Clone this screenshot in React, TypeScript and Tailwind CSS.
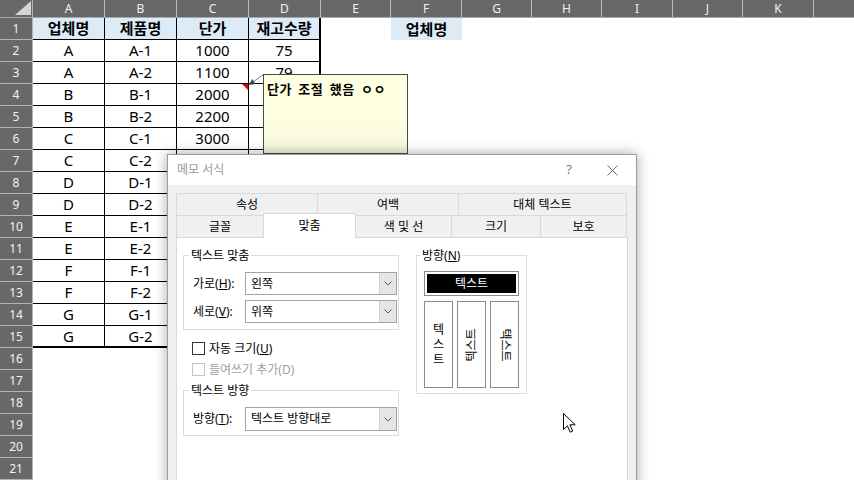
import clsx from "clsx";

const cols = [
  { l: "A", w: "w-[72px]" },
  { l: "B", w: "w-[72px]" },
  { l: "C", w: "w-[72px]" },
  { l: "D", w: "w-[72px]" },
  { l: "E", w: "w-[70px]" },
  { l: "F", w: "w-[71px]" },
  { l: "G", w: "w-[70px]" },
  { l: "H", w: "w-[70px]" },
  { l: "I", w: "w-[71px]" },
  { l: "J", w: "w-[70px]" },
  { l: "K", w: "w-[71px]" },
];

const tableRows = [
  ["업체명", "제품명", "단가", "재고수량"],
  ["A", "A-1", "1000", "75"],
  ["A", "A-2", "1100", "79"],
  ["B", "B-1", "2000", "60"],
  ["B", "B-2", "2200", "45"],
  ["C", "C-1", "3000", "30"],
  ["C", "C-2", "3100", "25"],
  ["D", "D-1", "4000", "50"],
  ["D", "D-2", "4200", "40"],
  ["E", "E-1", "5000", "20"],
  ["E", "E-2", "5100", "15"],
  ["F", "F-1", "6000", "35"],
  ["F", "F-2", "6300", "10"],
  ["G", "G-1", "7000", "55"],
  ["G", "G-2", "7500", "65"],
];

function ColumnHeader() {
  return (
    <div className="flex h-[18px] bg-[#686868] border-b border-[#a8a8a8]">
      <div className="w-[33px] shrink-0 border-r border-[#b4b4b4] flex items-end justify-end">
        <svg width="16" height="14" viewBox="0 0 16 14" className="mb-[2px] mr-[1px]">
          <polygon points="0,14 16,14 16,0" fill="#d6d6d6" />
        </svg>
      </div>
      {cols.map((c) => (
        <div
          key={c.l}
          className={clsx(
            c.w,
            "shrink-0 border-r border-[#bdbdbd] text-[12px] text-[#f2f2f2] flex items-center justify-center",
          )}
        >
          {c.l}
        </div>
      ))}
      <div className="flex-1" />
    </div>
  );
}

function SheetRow({ n }: { n: number }) {
  const cells = tableRows[n - 1];
  const isHead = n === 1;
  const isLast = n === 15;
  return (
    <div className="flex h-[22px]">
      <div className="w-[33px] shrink-0 bg-[#686868] border-r border-b border-[#b4b4b4] text-[12px] text-[#f2f2f2] flex items-center justify-center">
        {n}
      </div>
      {cols.map((c, i) => {
        if (i < 4 && cells) {
          return (
            <div
              key={c.l}
              className={clsx(
                c.w,
                "relative shrink-0 flex items-center justify-center text-[15px] text-black border-black",
                i === 3 ? "border-r-2" : "border-r",
                isLast ? "border-b-2" : "border-b",
                isHead && "bg-[#ddebf7] font-bold",
              )}
            >
              {cells[i]}
              {n === 4 && i === 2 && (
                <svg width="6" height="6" viewBox="0 0 6 6" className="absolute top-0 right-0">
                  <polygon points="0,0 6,0 6,6" fill="#e00000" />
                </svg>
              )}
            </div>
          );
        }
        if (isHead && c.l === "F") {
          return (
            <div
              key={c.l}
              className={clsx(c.w, "shrink-0 bg-[#ddebf7] font-bold text-[15px] flex items-center justify-center")}
            >
              업체명
            </div>
          );
        }
        return <div key={c.l} className={clsx(c.w, "shrink-0")} />;
      })}
      <div className="flex-1" />
    </div>
  );
}

function Chevron() {
  return (
    <svg width="8" height="5" viewBox="0 0 8 5">
      <polyline points="0.5,0.5 4,4 7.5,0.5" fill="none" stroke="#5c5c5c" strokeWidth="1" />
    </svg>
  );
}

function Combo({ value, h = "h-[23px]" }: { value: string; h?: string }) {
  return (
    <div className={clsx("w-[152px] flex border border-[#a3a3a3] bg-white", h)}>
      <span className="pl-[5px] flex items-center text-[12px]">{value}</span>
      <div className="ml-auto w-[17px] h-full bg-[#e5e5e5] border-l border-[#cfcfcf] flex items-center justify-center">
        <Chevron />
      </div>
    </div>
  );
}

function Checkbox({ label, disabled }: { label: React.ReactNode; disabled?: boolean }) {
  return (
    <div className="flex items-center h-[17px] pl-[9px] gap-[4px]">
      <div
        className={clsx(
          "w-[13px] h-[13px] bg-white border",
          disabled ? "border-[#c4c4c4]" : "border-[#333333]",
        )}
      />
      <span className={clsx("text-[12px]", disabled ? "text-[#a0a0a0]" : "text-black")}>{label}</span>
    </div>
  );
}

function NoteDialog() {
  return (
    <div className="absolute left-[167px] top-[154px] w-[470px] h-[340px] bg-[#f0f0f0] border border-[#9c9c9c] shadow-[0_0_12px_rgba(0,0,0,0.35)] flex flex-col">
      {/* Title */}
      <div className="h-[30px] shrink-0 bg-white flex items-center pl-[9px]">
        <span className="text-[12px] text-[#9a9a9a]">메모 서식</span>
        <span className="ml-auto text-[13px] text-[#7a7a7a]">?</span>
        <svg width="11" height="11" viewBox="0 0 11 11" className="ml-[35px] mr-[18px]">
          <line x1="0.5" y1="0.5" x2="10.5" y2="10.5" stroke="#6d6d6d" />
          <line x1="10.5" y1="0.5" x2="0.5" y2="10.5" stroke="#6d6d6d" />
        </svg>
      </div>

      <div className="px-[8px] pt-[8px] shrink-0">
        {/* Tabs */}
        <div className="flex h-[22px] text-[12px]">
          <div className="w-[141px] border-t border-l border-[#d9d9d9] flex items-center justify-center">속성</div>
          <div className="w-[141px] border-t border-l border-[#d9d9d9] flex items-center justify-center">여백</div>
          <div className="w-[169px] border-t border-l border-r border-[#d9d9d9] flex items-center justify-center">대체 텍스트</div>
        </div>
        <div className="flex items-end h-[22px] text-[12px]">
          <div className="w-[87px] h-[22px] border-t border-l border-[#d9d9d9] flex items-center justify-center">글꼴</div>
          <div className="relative z-10 w-[93px] h-[25px] -mb-px bg-white border-t border-l border-r border-[#d9d9d9] flex items-center justify-center pb-[1px]">
            맞춤
          </div>
          <div className="w-[95px] h-[22px] border-t border-[#d9d9d9] flex items-center justify-center">색 및 선</div>
          <div className="w-[89px] h-[22px] border-t border-l border-[#d9d9d9] flex items-center justify-center">크기</div>
          <div className="w-[87px] h-[22px] border-t border-l border-r border-[#d9d9d9] flex items-center justify-center">보호</div>
        </div>

        {/* Panel */}
        <div className="h-[250px] bg-white border border-[#d9d9d9] flex pl-[6px] pt-[9px]">
          <div className="w-[216px] flex flex-col">
            <fieldset className="border border-[#dcdcdc]">
              <legend className="ml-[5px] px-[2px] text-[12px] leading-[17px]">텍스트 맞춤</legend>
              <div className="pt-[8px] pb-[6px] pl-[9px] flex flex-col gap-[5px]">
                <div className="flex items-center">
                  <span className="w-[52px] text-[12px]">
                    가로(<span className="underline">H</span>):
                  </span>
                  <Combo value="왼쪽" />
                </div>
                <div className="flex items-center">
                  <span className="w-[52px] text-[12px]">
                    세로(<span className="underline">V</span>):
                  </span>
                  <Combo value="위쪽" />
                </div>
              </div>
            </fieldset>

            <div className="mt-[10px] flex flex-col gap-[4px]">
              <Checkbox
                label={
                  <>
                    자동 크기(<span className="underline">U</span>)
                  </>
                }
              />
              <Checkbox label="들여쓰기 추가(D)" disabled />
            </div>

            <fieldset className="mt-[4px] border border-[#dcdcdc]">
              <legend className="ml-[5px] px-[2px] text-[12px] leading-[17px]">텍스트 방향</legend>
              <div className="pt-[8px] pb-[4px] pl-[9px] flex items-center">
                <span className="w-[52px] text-[12px]">
                  방향(<span className="underline">T</span>):
                </span>
                <Combo value="텍스트 방향대로" h="h-[24px]" />
              </div>
            </fieldset>
          </div>

          <fieldset className="ml-[17px] w-[111px] h-[147px] border border-[#dcdcdc]">
            <legend className="ml-[3px] px-[2px] text-[12px] leading-[17px]">
              방향(<span className="underline">N</span>)
            </legend>
            <div className="pt-[7px] pl-[7px] w-[102px]">
              <div className="h-[25px] border border-[#8b8b8b] p-[2px] bg-white">
                <div className="h-full bg-black text-white text-[12px] flex items-center justify-center">텍스트</div>
              </div>
              <div className="mt-[5px] flex gap-[4px]">
                <div className="w-[29px] h-[87px] border border-[#8b8b8b] bg-white flex flex-col items-center justify-center text-[12px] leading-[15px]">
                  <span>텍</span>
                  <span>스</span>
                  <span>트</span>
                </div>
                <div className="w-[29px] h-[87px] border border-[#8b8b8b] bg-white flex items-center justify-center overflow-hidden">
                  <span className="-rotate-90 whitespace-nowrap text-[12px]">텍스트</span>
                </div>
                <div className="w-[29px] h-[87px] border border-[#8b8b8b] bg-white flex items-center justify-center overflow-hidden">
                  <span className="rotate-90 whitespace-nowrap text-[12px]">텍스트</span>
                </div>
              </div>
            </div>
          </fieldset>
        </div>
      </div>
    </div>
  );
}

export default function App() {
  const rowNums = Array.from({ length: 21 }, (_, i) => i + 1);
  return (
    <div className="relative w-[854px] h-[480px] overflow-hidden bg-white text-black [font-family:'Noto_Sans','Noto_Sans_CJK_KR',sans-serif]">
      <ColumnHeader />
      {rowNums.map((n) => (
        <SheetRow key={n} n={n} />
      ))}

      {/* Comment arrow */}
      <svg width="24" height="20" viewBox="0 0 24 20" className="absolute left-[244px] top-[70px]">
        <line x1="20" y1="4" x2="8" y2="12.8" stroke="#7a7a7a" strokeWidth="1" />
        <polygon points="5,15 11.6,13.9 8.1,9" fill="#444444" />
      </svg>

      {/* Comment box */}
      <div className="absolute left-[263px] top-[74px] w-[145px] h-[80px] border border-[#4a4a4a] bg-gradient-to-b from-[#ffffe1] via-[#ffffe1] to-[#f6f6dc] pl-[3px] pt-[1px]">
        <span className="text-[13px] font-bold leading-[16px] tracking-[0.5px] [word-spacing:3px] [font-family:'Noto_Sans_CJK_KR',sans-serif]">
          단가 조절 했음 ㅇㅇ
        </span>
      </div>

      <NoteDialog />

      {/* Mouse pointer */}
      <svg width="14" height="21" viewBox="0 0 14 21" className="absolute left-[563px] top-[413px]">
        <path
          d="M0.5 0.5 L0.5 16.5 L4.4 12.8 L7.2 19.2 L9.7 18.1 L6.9 11.8 L12.2 11.8 Z"
          fill="#ffffff"
          stroke="#000000"
          strokeWidth="1"
          strokeLinejoin="round"
        />
      </svg>
    </div>
  );
}
